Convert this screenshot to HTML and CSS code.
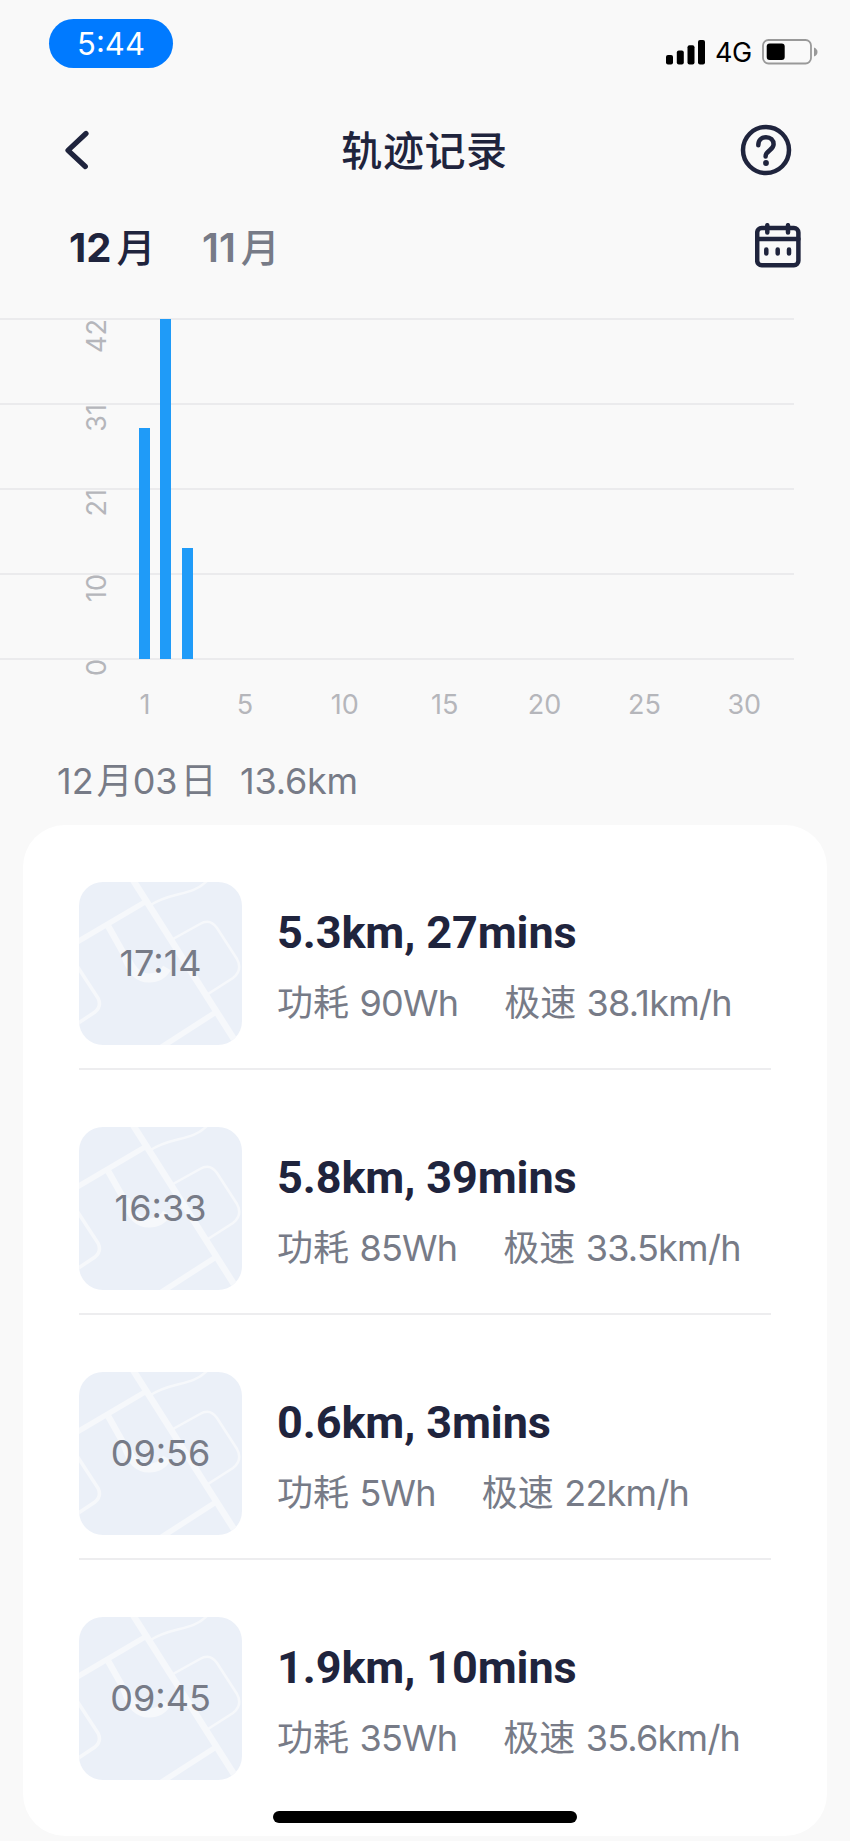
FILE: index.html
```
<!DOCTYPE html>
<html lang="zh-CN">
<head>
    <meta charset="UTF-8">
    <meta name="viewport" content="width=device-width, initial-scale=1.0">
    <title>轨迹记录</title>
    <link rel="stylesheet" href="styles.css">
</head>
<body>
    <!-- Shared map thumbnail -->
    <svg class="defs" width="0" height="0">
        <symbol id="map" viewBox="0 0 163 163">
            <g fill="none" stroke="#f6f8fb">
                <path stroke-width="6.5" d="M54 -2L158 162M28 42L46 74"/>
                <path stroke-width="5.5" d="M-2 60L66 20M137 130L78 168"/>
                <path stroke-width="9" d="M46 72Q54 96 70 96Q82 96 88 86"/>
                <path stroke-width="3.5" d="M-2 84L19 116Q23 124 16 130L-2 142"/>
                <path stroke-width="2.5" d="M70 24C92 9 112 15 128 -1M94 57L121 42Q131 36 138 46L158 77Q164 88 154 96L129 112"/>
            </g>
        </symbol>
    </svg>

    <div class="status-bar">
        <div class="status-time">5:44</div>
        <div class="status-icons">
            <svg class="signal" width="40" height="25" viewBox="0 0 40 25">
                <rect x="0" y="15" width="7" height="9.5" rx="2"/>
                <rect x="10.8" y="10.5" width="7" height="14" rx="2"/>
                <rect x="21.5" y="5.2" width="7" height="19.3" rx="2"/>
                <rect x="32" y="0" width="7" height="24.5" rx="2"/>
            </svg>
            <span class="network">4G</span>
            <svg class="battery" width="57" height="26" viewBox="0 0 57 26">
                <rect x="1" y="1" width="48" height="23.5" rx="5.5" fill="none" stroke="#999" stroke-width="1.8"/>
                <rect x="4.7" y="4.5" width="18" height="16.5" rx="3"/>
                <path d="M52 8.5Q55.5 10 55.5 13Q55.5 16 52 17.5Z" fill="#999"/>
            </svg>
        </div>
    </div>

    <div class="header">
        <svg class="back" width="26" height="40" viewBox="0 0 26 40">
            <path d="M22 3.5L4 20.3L21.3 36.5"/>
        </svg>
        <h1>轨迹记录</h1>
        <svg class="help" width="52" height="52" viewBox="0 0 52 52">
            <circle cx="26" cy="26" r="23"/>
            <path d="M18.3 21.3C18.3 16 21.5 13.2 26 13.2C30.5 13.2 33.6 16.2 33.6 20.3C33.6 26.3 25.6 26.5 25.6 32.5"/>
            <circle class="dot" cx="26" cy="39" r="2.9"/>
        </svg>
    </div>

    <div class="months">
        <span class="month active">12<i>月</i></span>
        <span class="month">11<i>月</i></span>
        <svg class="calendar" width="46" height="45" viewBox="0 0 46 45">
            <rect x="2.2" y="5" width="41.2" height="37.3" rx="4.5"/>
            <path d="M2.2 16H43.4M12.3 2.2V9.5M33 2.2V9.5"/>
            <path d="M11.3 26.5V30.5M22.7 26.5V30.5M34 26.5V30.5"/>
        </svg>
    </div>

    <div class="chart">
        <div class="grid-row"><span>42</span></div>
        <div class="grid-row"><span>31</span></div>
        <div class="grid-row"><span>21</span></div>
        <div class="grid-row"><span>10</span></div>
        <div class="grid-row last"><span>0</span></div>
        <div class="bars">
            <div class="bar" style="height: 231px"></div>
            <div class="bar" style="height: 340px"></div>
            <div class="bar" style="height: 111px"></div>
        </div>
    </div>
    <div class="days">
        <span>1</span><span>5</span><span>10</span><span>15</span><span>20</span><span>25</span><span>30</span>
    </div>

    <div class="summary">
        <span class="date">12<i>月</i>03<i>日</i></span>
        <span class="total">13.6km</span>
    </div>

    <div class="card">
        <div class="trip">
            <div class="thumb"><svg><use href="#map"/></svg><span>17:14</span></div>
            <div class="info">
                <h2>5.3km, 27mins</h2>
                <p><span><i>功耗</i> 90Wh</span><span><i>极速</i> 38.1km/h</span></p>
            </div>
        </div>
        <div class="trip">
            <div class="thumb"><svg><use href="#map"/></svg><span>16:33</span></div>
            <div class="info">
                <h2>5.8km, 39mins</h2>
                <p><span><i>功耗</i> 85Wh</span><span><i>极速</i> 33.5km/h</span></p>
            </div>
        </div>
        <div class="trip">
            <div class="thumb"><svg><use href="#map"/></svg><span>09:56</span></div>
            <div class="info">
                <h2>0.6km, 3mins</h2>
                <p><span><i>功耗</i> 5Wh</span><span><i>极速</i> 22km/h</span></p>
            </div>
        </div>
        <div class="trip">
            <div class="thumb"><svg><use href="#map"/></svg><span>09:45</span></div>
            <div class="info">
                <h2>1.9km, 10mins</h2>
                <p><span><i>功耗</i> 35Wh</span><span><i>极速</i> 35.6km/h</span></p>
            </div>
        </div>
    </div>
    <div class="home-indicator"></div>
</body>
</html>
```
FILE: styles.css
```
* {
    box-sizing: border-box;
}

body {
    margin: 0;
    position: relative;
    width: 850px;
    height: 1841px;
    overflow: hidden;
    background-color: #f9f9f9;
    color: #1f243d;
    font-family: Inter, "Noto Sans CJK SC", sans-serif;
}

i {
    font-style: normal;
    font-family: "Noto Sans CJK SC", sans-serif;
    line-height: 0;
}

.defs {
    display: none;
}

/* Status bar */
.status-bar {
    display: flex;
    justify-content: space-between;
    height: 104px;
    padding: 19px 31px 0 49px;
}

.status-time {
    width: 124px;
    height: 49px;
    border-radius: 25px;
    background-color: #007aff;
    color: #fff;
    font-size: 31px;
    line-height: 50px;
    text-align: center;
}

.status-icons {
    display: flex;
    align-items: center;
    height: 26px;
    margin-top: 20px;
    color: #000;
}

.network {
    width: 46px;
    padding-left: 9px;
    font-size: 27px;
    line-height: 28px;
    padding-top: 2px;
    letter-spacing: -0.5px;
}

.battery {
    margin-left: 10px;
}

/* Header */
.header {
    display: flex;
    align-items: center;
    justify-content: space-between;
    height: 91px;
    padding: 0 58px 0 64px;
}

h1 {
    margin: 0 0 4px 19px;
    font-size: 41px;
    font-weight: 500;
    letter-spacing: 0.6px;
}

.back, .help, .calendar {
    fill: none;
    stroke: #1f243d;
    stroke-width: 4.5;
    stroke-linecap: round;
    stroke-linejoin: round;
}

.back {
    stroke-width: 5.2;
}

.help .dot {
    fill: #1f243d;
    stroke: none;
}

/* Month tabs */
.months {
    display: flex;
    align-items: center;
    height: 100px;
    padding: 0 49px 0 69px;
}

.month {
    width: 133px;
    padding-top: 5px;
    color: #777b87;
    font-size: 40px;
    font-weight: 600;
    line-height: 60px;
}

.month i {
    margin-left: 5px;
    font-size: 39px;
    font-weight: 500;
}

.month.active {
    color: #1f243d;
    font-weight: 700;
}

.calendar {
    margin-left: auto;
}

/* Chart */
.chart {
    position: relative;
    width: 794px;
    margin-top: 23px;
}

.grid-row {
    height: 85px;
    padding-left: 80px;
    border-top: 2px solid #ebebed;
}

.grid-row span {
    display: block;
    width: 34px;
    margin-top: -1px;
    writing-mode: vertical-rl;
    transform: rotate(180deg);
    color: #b5b6bb;
    font-size: 27px;
    line-height: 34px;
}

.grid-row.last {
    height: 30px;
}

.bars {
    position: absolute;
    left: 139px;
    top: 1px;
    display: flex;
    align-items: flex-end;
    gap: 10.4px;
    height: 340px;
}

.bar {
    width: 11px;
    background-color: #1f9bf8;
}

.days {
    display: flex;
    margin-left: 95px;
    color: #b5b6bb;
    font-size: 27px;
    line-height: 34px;
}

.days span {
    width: 99.9px;
    text-align: center;
}

/* Day summary */
.summary {
    display: flex;
    height: 103px;
    padding: 32px 0 0 57px;
    color: #777b87;
    font-size: 36px;
    line-height: 54px;
}

.date {
    width: 183px;
}

.date i {
    margin: 0 0 0 3px;
}

.total {
    letter-spacing: -0.2px;
}

/* Trip list */
.card {
    height: 1011px;
    margin: 0 23px;
    padding: 0 56px;
    border-radius: 42px;
    background-color: #fff;
}

.trip {
    display: flex;
    height: 244.9px;
    padding-top: 57px;
    border-bottom: 2px solid #ededef;
}

.trip:last-child {
    border-bottom: none;
}

.thumb {
    position: relative;
    width: 163px;
    height: 163px;
    border-radius: 24px;
    overflow: hidden;
    background-color: #ebf0f8;
    color: #777b87;
    font-size: 36px;
    line-height: 163px;
    text-align: center;
}

.thumb svg {
    position: absolute;
    left: 0;
    top: 0;
    width: 163px;
    height: 163px;
}

.thumb span {
    position: relative;
}

.info {
    padding: 23px 0 0 35px;
    white-space: nowrap;
}

h2 {
    margin: 0;
    font-family: Roboto, sans-serif;
    font-size: 45px;
    font-weight: 700;
    line-height: 56px;
    letter-spacing: -0.1px;
}

.info p {
    display: flex;
    gap: 46px;
    margin: 15px 0 0;
    color: #777b87;
    font-size: 36px;
    line-height: 54px;
    letter-spacing: -0.75px;
}

.info i {
    margin-right: 1px;
    letter-spacing: 0;
}

.home-indicator {
    position: absolute;
    left: 273px;
    bottom: 18px;
    width: 304px;
    height: 12px;
    border-radius: 6px;
    background-color: #000;
}
```
